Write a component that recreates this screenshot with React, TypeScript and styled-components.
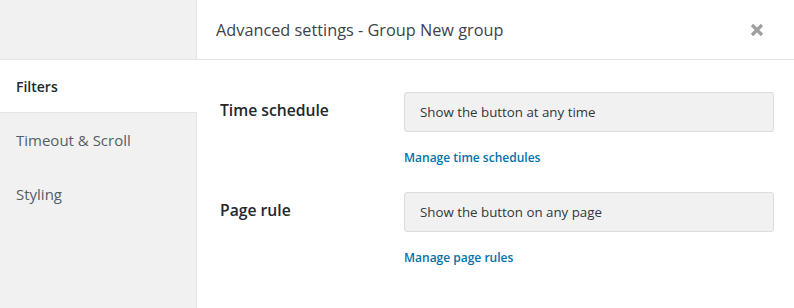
import React from "react";
import styled, { createGlobalStyle } from "styled-components";

const Global = createGlobalStyle`
  html, body { margin: 0; padding: 0; background: #fff; }
  body { font-family: "Open Sans", "Noto Sans", Arial, sans-serif; }
  * { box-sizing: border-box; }
`;

const Shell = styled.div`
  display: flex;
  width: 794px;
  height: 308px;
  background: #fff;
  overflow: hidden;
`;

const Sidebar = styled.nav`
  width: 197px;
  flex: none;
  background: #f1f1f1;
  border-right: 1px solid #e4e4e4;
  display: flex;
  flex-direction: column;
`;

const SidebarTop = styled.div`
  height: 60px;
  border-bottom: 1px solid #e4e4e4;
`;

const NavItem = styled.div<{ $active?: boolean }>`
  height: ${(p) => (p.$active ? 53 : 54)}px;
  display: flex;
  align-items: center;
  padding-left: 16px;
  font-size: ${(p) => (p.$active ? "14px" : "15px")};
  margin-right: ${(p) => (p.$active ? "-1px" : "0")};
  background: ${(p) => (p.$active ? "#fff" : "transparent")};
  border-bottom: ${(p) => (p.$active ? "1px solid #e4e4e4" : "none")};
  font-weight: ${(p) => (p.$active ? 600 : 400)};
  color: ${(p) => (p.$active ? "#23282d" : "#555d66")};
  position: relative;
`;

const Main = styled.div`
  flex: 1;
  display: flex;
  flex-direction: column;
`;

const Header = styled.header`
  height: 60px;
  border-bottom: 1px solid #e4e4e4;
  display: flex;
  align-items: center;
  justify-content: space-between;
  padding: 0 30px 0 19px;
`;

const Title = styled.h1`
  margin: 0;
  font-size: 16.3px;
  font-weight: 400;
  color: #3c434a;
`;

const Close = styled.button`
  border: 0;
  background: none;
  padding: 0;
  width: 14px;
  height: 14px;
  display: flex;
  cursor: pointer;
`;

const Content = styled.div`
  padding: 32px 20px 0 23px;
  display: grid;
  grid-template-columns: 184px 1fr;
  row-gap: 25px;
`;

const Label = styled.div`
  font-size: 15.7px;
  font-weight: 600;
  color: #23282d;
  line-height: 20px;
  padding-top: 8px;
`;

const Field = styled.div`
  display: flex;
  flex-direction: column;
`;

const Select = styled.div`
  height: 40px;
  border: 1px solid #dcdcdc;
  border-radius: 3px;
  background: #f1f1f1;
  display: flex;
  align-items: center;
  padding-left: 15px;
  font-size: 13.3px;
  color: #32373c;
`;

const Link = styled.a`
  margin-top: 17px;
  font-size: 12px;
  line-height: 18px;
  font-weight: 600;
  color: #0073aa;
  text-decoration: none;
`;

const rows = [
  { label: "Time schedule", value: "Show the button at any time", link: "Manage time schedules" },
  { label: "Page rule", value: "Show the button on any page", link: "Manage page rules" },
];

export default function App() {
  return (
    <>
      <Global />
      <Shell>
        <Sidebar>
          <SidebarTop />
          <NavItem $active>Filters</NavItem>
          <NavItem>Timeout &amp; Scroll</NavItem>
          <NavItem>Styling</NavItem>
        </Sidebar>
        <Main>
          <Header>
            <Title>Advanced settings - Group New group</Title>
            <Close aria-label="Close">
              <svg width="14" height="14" viewBox="0 0 14 14">
                <path d="M2 2 L12 12 M12 2 L2 12" stroke="#a0a0a0" strokeWidth="3.2" strokeLinecap="butt" />
              </svg>
            </Close>
          </Header>
          <Content>
            {rows.map((r) => (
              <React.Fragment key={r.label}>
                <Label>{r.label}</Label>
                <Field>
                  <Select>{r.value}</Select>
                  <Link href="#">{r.link}</Link>
                </Field>
              </React.Fragment>
            ))}
          </Content>
        </Main>
      </Shell>
    </>
  );
}
